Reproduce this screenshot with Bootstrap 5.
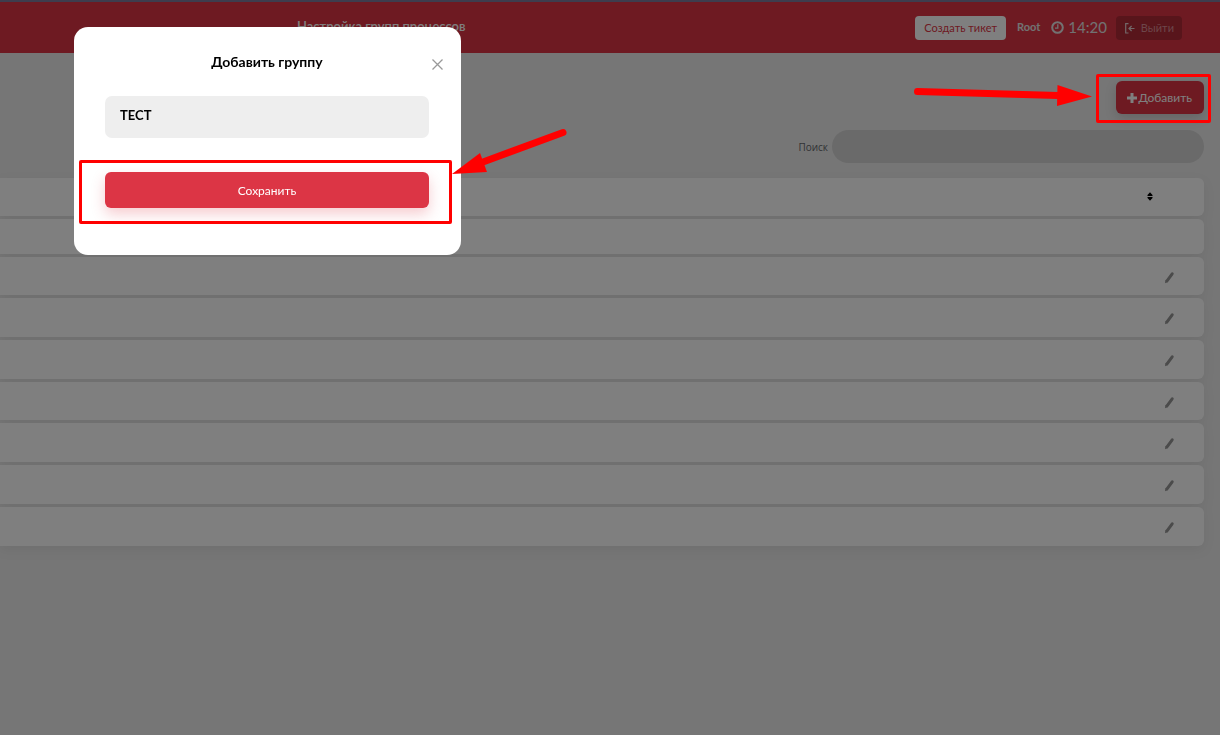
<!DOCTYPE html>
<html lang="ru">
<head>
<meta charset="utf-8">
<meta name="viewport" content="width=device-width, initial-scale=1">
<title>Настройка групп процессов</title>
<link href="https://cdn.jsdelivr.net/npm/bootstrap@5.3.0/dist/css/bootstrap.min.css" rel="stylesheet">
<style>
body { font-family: Lato, "Open Sans", sans-serif; background: #ececec; font-size: 12px; min-height: 100vh; overflow: hidden; }
.topbar { background: #dc3545; border-top: 2px solid #7c7a9c; height: 53px; padding: 0 38px 0 297px; }
.page-name { font-size: 13px; line-height: 20px; font-weight: 600; padding-bottom: 3px; }
.btn { --bs-btn-font-size: 12px; --bs-btn-line-height: 16px; --bs-btn-border-width: 0; }
.btn-ticket { --bs-btn-font-size: 11px; --bs-btn-color: #dc3545; --bs-btn-bg: #fff; --bs-btn-padding-x: 9px; --bs-btn-padding-y: 4px; --bs-btn-border-radius: 4px; }
.btn-exit { --bs-btn-font-size: 11px; --bs-btn-color: #d98c94; --bs-btn-bg: #b02a37; --bs-btn-padding-x: 8px; --bs-btn-padding-y: 4px; --bs-btn-border-radius: 4px; }
.user-name { margin-left: 11px; font-size: 11px; font-weight: 700; color: #e4e4e4; }
.clock { margin: 0 9px 0 11px; font-size: 15px; color: #e4e4e4; }
.content-area { padding: 28px 16px 0 0; }
.btn-red { --bs-btn-color: #fff; --bs-btn-bg: #dc3545; --bs-btn-border-radius: 6px; box-shadow: 0 6px 14px rgba(220, 53, 69, .25); }
.btn-add { height: 33px; padding: 0 12px 0 11px; gap: 1px; box-shadow: 0 4px 12px rgba(0, 0, 0, .15); }
.search-line { margin-top: 16px; font-family: "Open Sans", sans-serif; font-size: 10px; color: #63666b; }
.search-line label { padding-top: 2px; }
.search-line input { width: 372px; height: 33px; border: 0; background: #d4d4d4; border-radius: 17px; padding: 0 16px; }
.groups { border-collapse: separate; border-spacing: 0 3px; margin-top: 12px; filter: drop-shadow(0 4px 6px rgba(0, 0, 0, .05)); }
.groups th, .groups td { background: #fff; padding: 2px 0 0; height: 39px; vertical-align: middle; }
.groups thead th, .groups tbody tr:nth-child(3n+2):not(:last-child) td { height: 38px; }
.groups thead th { padding: 0 0 2px; }
.groups tbody tr:first-child td { height: 35px; }
.groups tr > :last-child { border-radius: 0 6px 6px 0; width: 88px; }
.groups svg { display: block; margin-left: 48px; }
.groups thead svg { margin-left: 31px; }
.dialog-group { margin: 27px 0 0 74px; width: 387px; max-width: none; }
.dialog-group .modal-content { border: 0; border-radius: 14px; padding: 24px 32px 47px 31px; }
.dialog-title { font-size: 14px; line-height: 22px; font-weight: 700; color: #000; }
.name-field { height: 42px; margin-top: 23px; padding: 0 15px 5px; border: 0; border-radius: 7px; background: #eee; font-size: 13px; font-weight: 700; color: #000; }
.btn-save { height: 36px; margin-top: 34px; padding: 2px 0 0; }
.btn-x { top: 31px; right: 17px; padding: 0; border: 0; background: none; line-height: 0; }
.frame { border: 3px solid #f00; border-radius: 2px; pointer-events: none; }
.frame-save { left: 5px; top: 133px; width: 373px; height: 64px; }
.arrow-save { left: 377px; top: 98px; }
.marks { z-index: 1060; top: 0; right: 0; }
.frame-add { top: 74px; right: 9px; width: 115px; height: 49px; }
.arrow-add { top: 80px; right: 126px; }
</style>
</head>
<body>
<header class="topbar d-flex align-items-center">
  <div class="page-name text-white me-auto">Настройка групп процессов</div>
  <button type="button" class="btn btn-ticket">Создать тикет</button>
  <span class="user-name">Root</span>
  <span class="clock d-flex align-items-center gap-1">
    <svg width="13" height="13" viewBox="0 0 13 13" fill="none" stroke="currentColor" aria-hidden="true"><circle cx="6.5" cy="6.5" r="5.3" stroke-width="2"/><path d="M6.8 3.2v4H4" stroke-width="1.3"/></svg>
    14:20
  </span>
  <button type="button" class="btn btn-exit d-flex align-items-center gap-1">
    <svg width="13" height="12" viewBox="0 0 13 12" fill="none" stroke="#e6d0d2" stroke-width="1.2" aria-hidden="true"><path d="M4.500 1.600H1.700v9.400h2.800M10.500 6.500H5M7.600 4L5 6.500l2.600 2.500"/></svg>
    Выйти
  </button>
</header>

<main class="content-area">
  <div class="d-flex justify-content-end">
    <button type="button" class="btn btn-red btn-add d-flex align-items-center">
      <svg width="10" height="10" viewBox="0 0 10 10" stroke="#fff" stroke-width="3" aria-hidden="true"><path d="M5 0v10M0 5h10"/></svg>Добавить
    </button>
  </div>
  <div class="search-line d-flex justify-content-end align-items-center">
    <label for="search" class="me-1">Поиск</label>
    <input type="search" id="search">
  </div>
  <table class="groups w-100">
    <thead><tr><th></th><th><svg width="6" height="9" viewBox="0 0 6 9" aria-hidden="true"><path d="M3 .2L5.500 3v1h-5V3zM.5 5h5v1L3 8.800.5 6z"/></svg></th></tr></thead>
    <tbody id="rows"><tr><td></td><td></td></tr></tbody>
  </table>
</main>

<div class="modal-backdrop show"></div>

<div class="modal d-block" role="dialog" aria-labelledby="dialogTitle">
  <div class="modal-dialog dialog-group">
    <form class="modal-content">
      <h1 class="dialog-title text-center mb-0" id="dialogTitle">Добавить группу</h1>
      <button type="button" class="btn-x position-absolute" aria-label="Закрыть"><svg width="13" height="13" viewBox="0 0 13 13" stroke="#999" stroke-width="1.3"><path d="M1.500 1.500l10 10M11.500 1.500l-10 10"/></svg></button>
      <input type="text" class="name-field w-100" value="ТЕСТ" aria-label="Название группы">
      <button type="button" class="btn btn-red btn-save w-100">Сохранить</button>
    </form>
    <div class="frame frame-save position-absolute"></div>
    <svg class="arrow-save position-absolute" width="118" height="52" viewBox="0 0 118 52" aria-hidden="true"><path d="M112 7.500L32 37" stroke="#f00" stroke-width="7" stroke-linecap="round"/><path d="M1 49L29 28l7 19z" fill="#f00"/></svg>
  </div>
</div>

<div class="marks position-absolute">
  <div class="frame frame-add position-absolute"></div>
  <svg class="arrow-add position-absolute" width="182" height="28" viewBox="0 0 182 28" aria-hidden="true"><path d="M5.500 11.500L146 15.500" stroke="#f00" stroke-width="7" stroke-linecap="round"/><path d="M145.500 5L180 16.500l-35 9.500z" fill="#f00"/></svg>
</div>

<script>
const pencil = '<svg width="11" height="13" viewBox="0 0 11 13" aria-hidden="true"><path d="M3 9.800L8.200 2.800" stroke="#969696" stroke-width="3" stroke-linecap="round"/><path d="M1.500 8.800L1 12.200l3-1.300z" fill="#969696"/></svg>';
document.getElementById('rows').insertAdjacentHTML('beforeend', ('<tr><td></td><td>' + pencil + '</td></tr>').repeat(7));
</script>
<script src="https://cdn.jsdelivr.net/npm/bootstrap@5.3.0/dist/js/bootstrap.bundle.min.js"></script>
</body>
</html>
